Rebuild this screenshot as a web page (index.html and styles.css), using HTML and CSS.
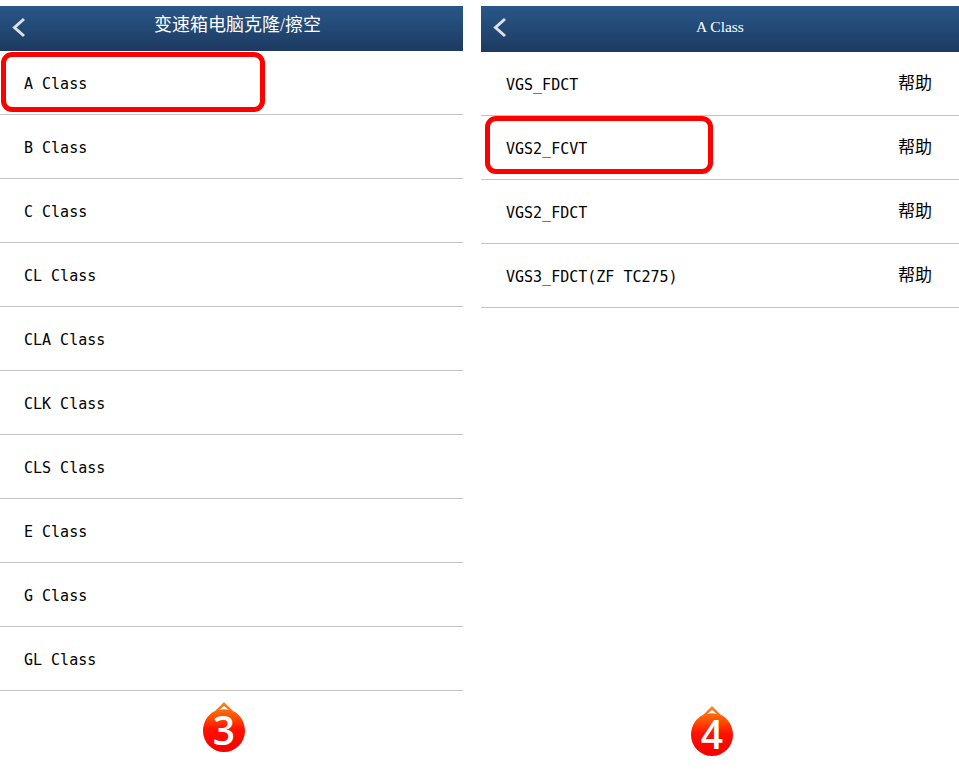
FILE: index.html
```html
<!DOCTYPE html>
<html lang="zh-CN">
<head>
    <meta charset="UTF-8" />
    <meta name="viewport" content="width=device-width, initial-scale=1" />
    <title>A Class</title>
    <link rel="stylesheet" href="styles.css">
</head>
<body>
    <svg class="defs" width="0" height="0" aria-hidden="true">
        <defs>
            <linearGradient id="drop-fill" x1="0" y1="0" x2="0" y2="1">
                <stop offset="0" stop-color="#f28a2a" />
                <stop offset="0.28" stop-color="#ff5400" />
                <stop offset="0.55" stop-color="#ff1000" />
                <stop offset="1" stop-color="#f40000" />
            </linearGradient>
        </defs>
    </svg>

    <div class="page">
        <div class="panel panel-left">
            <div class="header">
                <svg class="back" width="14" height="22" viewBox="0 0 14 22"><path d="M12 2 L2.5 10.5 L12 19" /></svg>
                <h1 class="title title-cn">变速箱电脑克隆/擦空</h1>
            </div>
            <ul class="list">
                <li class="row">A Class<span class="mark mark-left"></span></li>
                <li class="row">B Class</li>
                <li class="row">C Class</li>
                <li class="row">CL Class</li>
                <li class="row">CLA Class</li>
                <li class="row">CLK Class</li>
                <li class="row">CLS Class</li>
                <li class="row">E Class</li>
                <li class="row">G Class</li>
                <li class="row">GL Class</li>
            </ul>
            <div class="step step-left">
                <div class="badge">
                    <svg width="42" height="50" viewBox="0 0 42 50">
                        <path class="drop" d="M21 0 L30 9 C37 12 42 20 42 29 A21 21 0 0 1 0 29 C0 20 5 12 12 9 Z" />
                        <path class="shine" d="M21 4 L26 8 Q21 6.5 16 8 Z" />
                    </svg>
                    <span class="step-num">3</span>
                </div>
            </div>
        </div>

        <div class="panel panel-right">
            <div class="header header-tall">
                <svg class="back" width="14" height="22" viewBox="0 0 14 22"><path d="M12 2 L2.5 10.5 L12 19" /></svg>
                <h1 class="title">A Class</h1>
            </div>
            <ul class="list">
                <li class="row row-help">VGS_FDCT<a class="help">帮助</a></li>
                <li class="row row-help">VGS2_FCVT<a class="help">帮助</a><span class="mark mark-right"></span></li>
                <li class="row row-help">VGS2_FDCT<a class="help">帮助</a></li>
                <li class="row row-help">VGS3_FDCT(ZF TC275)<a class="help">帮助</a></li>
            </ul>
            <div class="step step-right">
                <div class="badge">
                    <svg width="42" height="50" viewBox="0 0 42 50">
                        <path class="drop" d="M21 0 L30 9 C37 12 42 20 42 29 A21 21 0 0 1 0 29 C0 20 5 12 12 9 Z" />
                        <path class="shine" d="M21 4 L26 8 Q21 6.5 16 8 Z" />
                    </svg>
                    <span class="step-num">4</span>
                </div>
            </div>
        </div>
    </div>
</body>
</html>
```

FILE: styles.css
```css
html, body {
    margin: 0;
    padding: 0;
    background: #fff;
}
.defs {
    display: block;
    height: 0;
}
.page {
    display: flex;
    gap: 18px;
    height: 776px;
    padding-top: 6px;
    box-sizing: border-box;
    overflow: hidden;
}
.panel {
    display: flex;
    flex-direction: column;
}
.panel-left {
    width: 463px;
}
.panel-right {
    width: 478px;
}
.header {
    display: flex;
    align-items: center;
    justify-content: center;
    position: relative;
    height: 45px;
    background: linear-gradient(#285789, #1d3a60);
}
.header-tall {
    height: 46px;
}
.back {
    position: absolute;
    left: 12px;
    top: 11px;
}
.back path {
    fill: none;
    stroke: #dce1e6;
    stroke-width: 3;
}
.title {
    margin: 0 0 5px;
    font-family: "Liberation Serif", "Noto Sans CJK SC", serif;
    font-size: 15.5px;
    line-height: 1;
    font-weight: normal;
    color: #fff;
}
.title-cn {
    margin: 0 0 7px 12px;
    font-size: 18px;
}
.list {
    margin: 0;
    padding: 0;
    list-style: none;
}
.row {
    display: flex;
    align-items: center;
    justify-content: space-between;
    position: relative;
    height: 64px;
    padding: 2px 24px 0;
    box-sizing: border-box;
    border-bottom: 1px solid #c4c4c4;
    font-family: "DejaVu Sans Mono", monospace;
    font-size: 15px;
    color: #000;
}
.row-help {
    padding: 2px 27px 0 25px;
}
.help {
    margin-bottom: 6px;
    font-family: "Noto Sans CJK SC", sans-serif;
    font-size: 17px;
}
.mark {
    position: absolute;
    border: 5px solid #f00;
    border-radius: 11px;
    box-sizing: border-box;
}
.mark-left {
    left: 1px;
    top: 1px;
    width: 264px;
    height: 60px;
}
.mark-right {
    left: 4px;
    top: 0;
    width: 228px;
    height: 58px;
}
.step {
    display: flex;
    justify-content: center;
}
.step-left {
    margin-top: 11px;
    padding-right: 15px;
}
.step-right {
    margin-top: 398px;
    padding-right: 16px;
}
.badge {
    position: relative;
    width: 42px;
    height: 50px;
}
.badge svg {
    display: block;
}
.drop {
    fill: url(#drop-fill);
}
.shine {
    fill: #fff;
}
.step-num {
    position: absolute;
    left: 0;
    right: 0;
    top: 7px;
    font-family: "Open Sans", sans-serif;
    font-size: 39px;
    line-height: 42px;
    font-weight: 600;
    color: #fff;
    text-align: center;
}
```
